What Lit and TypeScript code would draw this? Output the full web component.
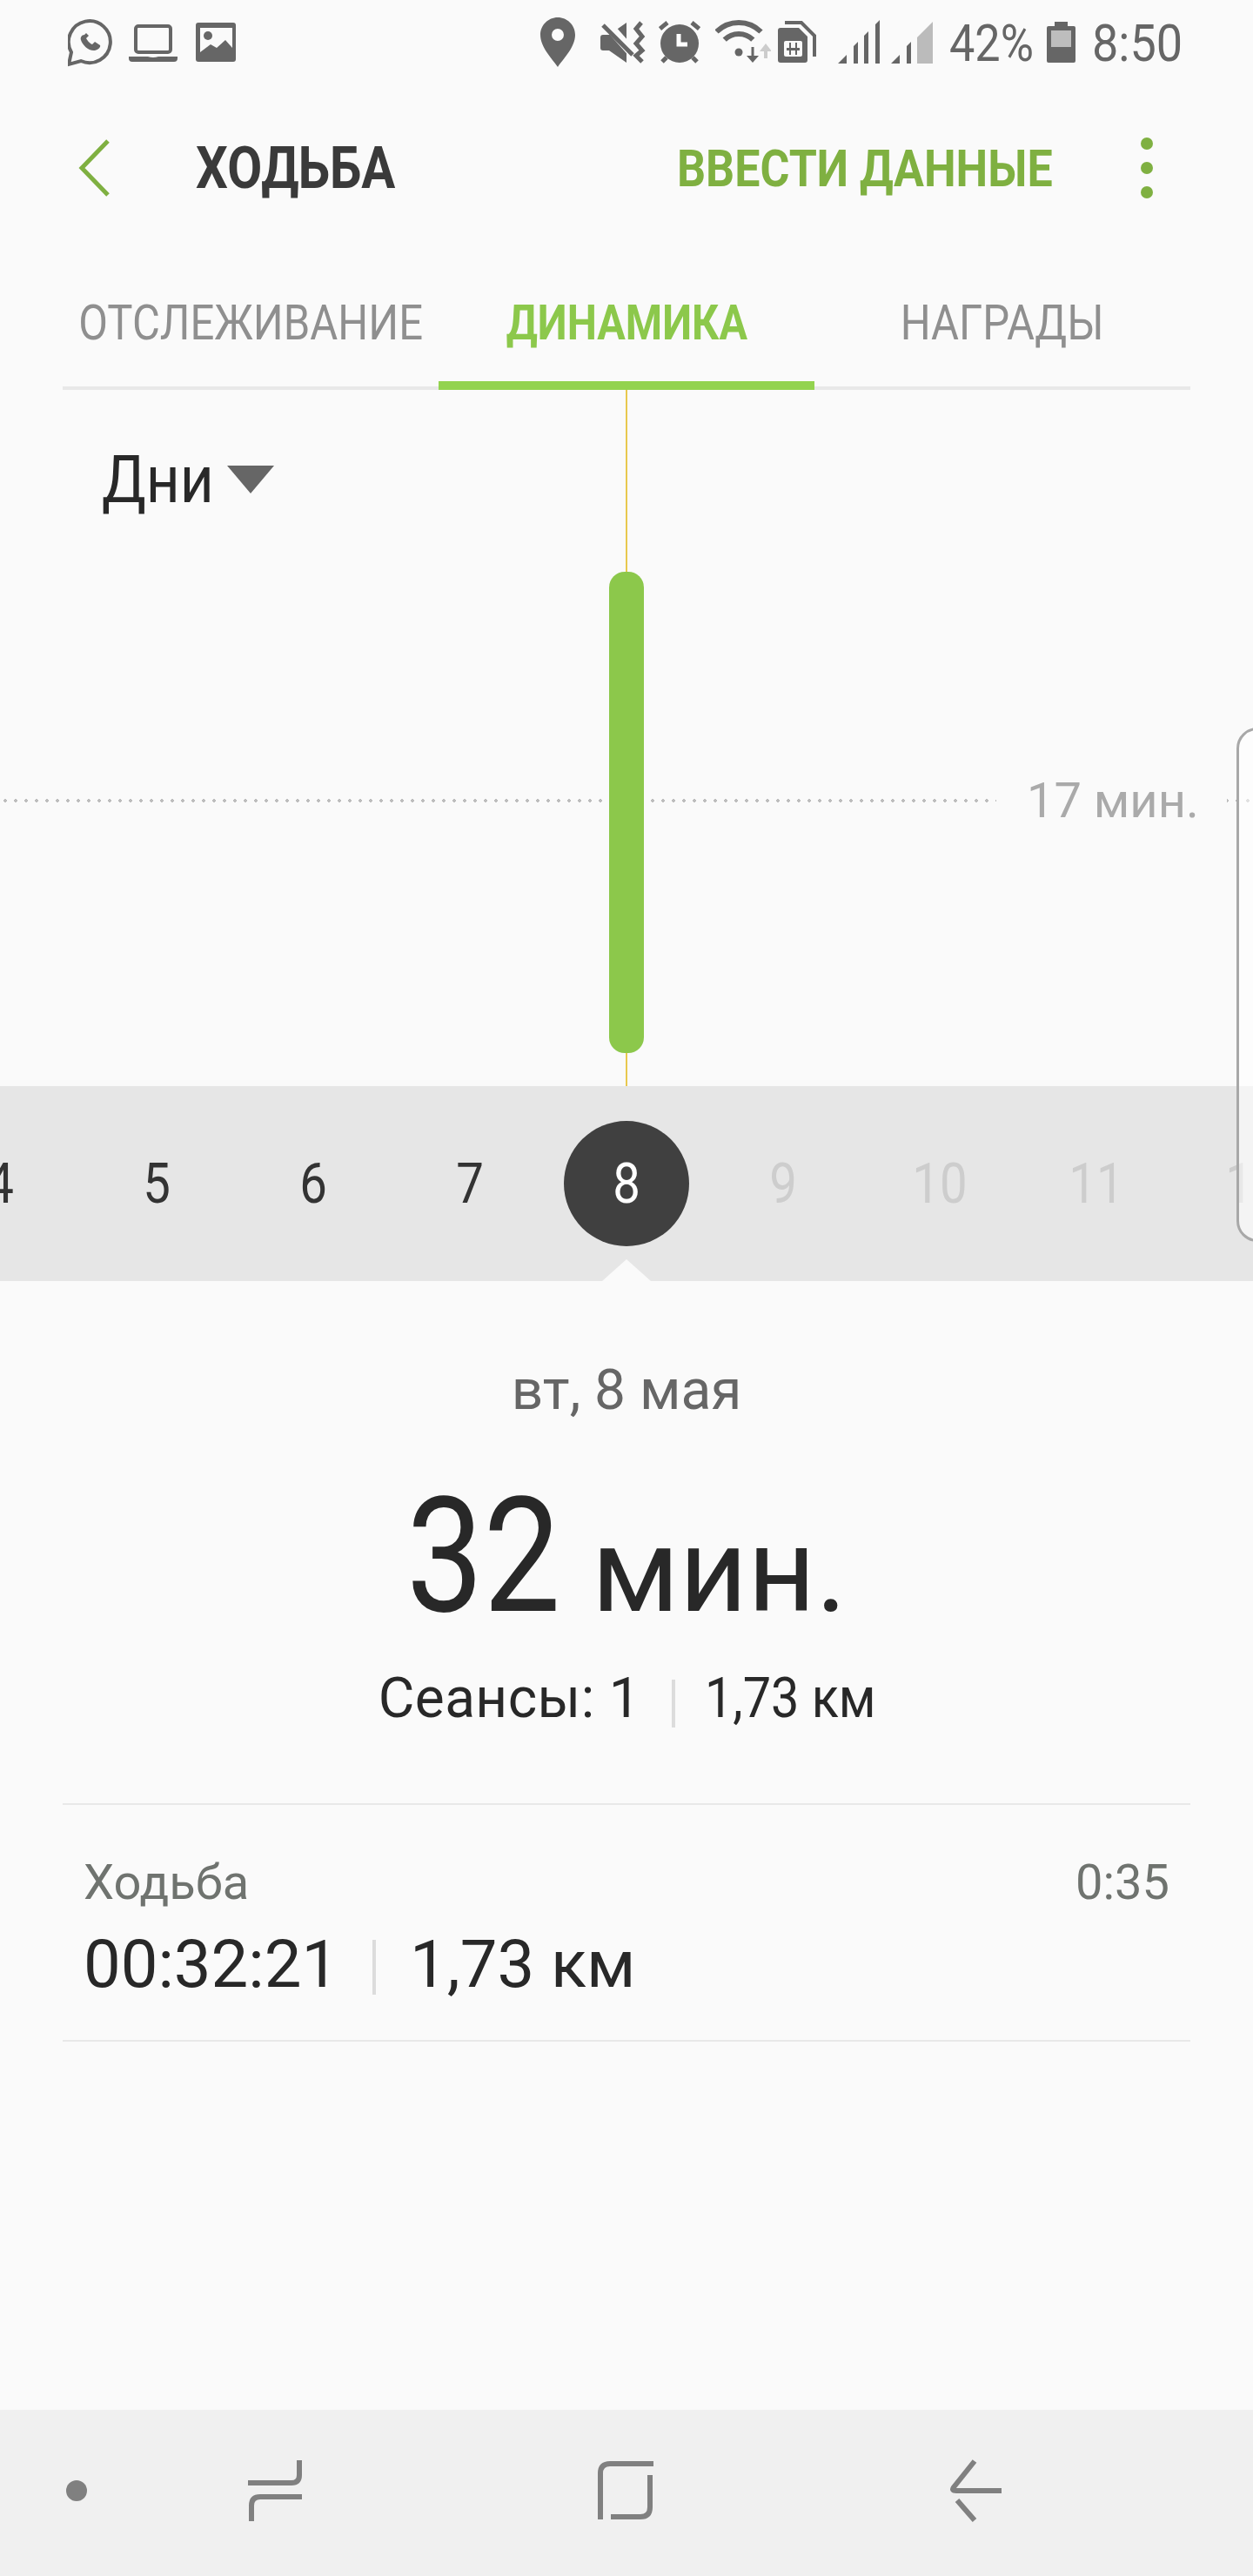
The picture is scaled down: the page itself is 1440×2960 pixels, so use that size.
import { LitElement, html, css } from "lit"
import { customElement } from "lit/decorators.js"

const DAYS = [4, 5, 6, 7, 8, 9, 10, 11, 12]
const TODAY = 8

@customElement("app-root")
export class AppRoot extends LitElement {
  static styles = css`
    :host {
      display: flex;
      flex-direction: column;
      position: relative;
      width: 1440px;
      height: 2960px;
      overflow: hidden;
      background: #fafafa;
      font-family: Roboto, "Noto Sans", sans-serif;
      color: #282828;
    }

    /* status bar */
    .status {
      display: flex;
      align-items: flex-start;
      height: 80px;
      padding: 20px 0 0 78px;
      box-sizing: border-box;
      flex: none;
    }
    .status svg {
      display: block;
      flex: none;
      height: 60px;
    }
    .status .laptop { margin-left: 18px; }
    .status .picture { margin-left: 21px; }
    .status .pin { margin-left: 350px; }
    .status .mute { margin-left: 29px; }
    .status .alarm { margin-left: 15px; }
    .status .wifi { margin-left: 17px; }
    .status .sim { margin-left: 8px; }
    .status .sig1 { margin-left: 24px; }
    .status .sig2 { margin-left: 11px; }
    .status .battery { margin-left: 17px; }
    .status-text {
      flex: none;
      font-size: 60px;
      line-height: 60px;
      color: #666;
      transform-origin: left center;
      white-space: nowrap;
    }
    .pct { width: 95px; margin-left: 18px; transform: scaleX(0.87); }
    .clock { width: 98px; margin-left: 19px; transform: scaleX(0.9); }

    /* app bar */
    .appbar {
      display: flex;
      align-items: center;
      height: 226px;
      flex: none;
      box-sizing: border-box;
      padding-left: 90px;
    }
    .back { flex: none; display: block; }
    .title {
      margin-left: 99px;
      font-size: 66px;
      font-weight: 700;
      color: #3a3a3a;
      white-space: nowrap;
      width: 230px;
      transform: scaleX(0.88);
      transform-origin: left center;
    }
    .action {
      margin-left: 323px;
      font-size: 60px;
      font-weight: 700;
      color: #7fb041;
      white-space: nowrap;
      width: 427px;
      transform: scaleX(0.865);
      transform-origin: left center;
    }
    .dots {
      display: flex;
      flex-direction: column;
      gap: 14px;
      margin-left: 106px;
    }
    .dots i {
      display: block;
      width: 14px;
      height: 14px;
      border-radius: 50%;
      background: #7fb041;
    }

    /* tabs */
    .tabs {
      display: grid;
      grid-template-columns: repeat(3, 432px);
      margin: 0 72px;
      flex: none;
    }
    .tab {
      display: flex;
      align-items: center;
      justify-content: center;
      height: 142px;
      box-sizing: border-box;
      padding-bottom: 8px;
      border-bottom: 4px solid #e8e8e8;
      font-size: 56px;
      color: #8f8f8f;
      white-space: nowrap;
    }
    .tab span { display: block; transform: scaleX(0.875); }
    .tab.active {
      color: #8cc84b;
      font-weight: 700;
      border-bottom: 10px solid #93d34f;
      padding-bottom: 2px;
    }
    .tab.active span { transform: scaleX(0.865); }

    /* chart */
    .chart {
      position: relative;
      height: 800px;
      flex: none;
    }
    .range {
      display: flex;
      align-items: center;
      padding: 58px 0 0 117px;
      font-size: 76px;
      line-height: 90px;
    }
    .range span { display: block; width: 121px; transform: scaleX(0.89); transform-origin: left center; }
    .range i {
      display: block;
      margin-left: 23px;
      width: 0;
      height: 0;
      border-left: 27px solid transparent;
      border-right: 27px solid transparent;
      border-top: 32px solid #666;
    }
    .cursor {
      position: absolute;
      left: 719px;
      top: 0;
      width: 2px;
      height: 800px;
      background: #e8c84e;
    }
    .bar {
      position: absolute;
      left: 700px;
      top: 209px;
      width: 40px;
      height: 553px;
      border-radius: 18px;
      background: #8cc84b;
    }
    .avg {
      position: absolute;
      left: 0;
      top: 470px;
      width: 1440px;
      height: 4px;
      background-image: radial-gradient(circle at center, #bdbdbd 1.6px, transparent 2px);
      background-size: 12px 4px;
    }
    .avg-label {
      position: absolute;
      left: 1145px;
      top: 436px;
      width: 265px;
      padding-left: 35px;
      box-sizing: border-box;
      background: #fafafa;
      font-size: 56px;
      line-height: 72px;
      color: #aaa;
      white-space: nowrap;
    }

    /* date strip */
    .days {
      display: flex;
      justify-content: center;
      align-items: center;
      position: relative;
      height: 224px;
      flex: none;
      background: #e6e6e6;
      overflow: hidden;
    }
    .day {
      flex: none;
      width: 180px;
      display: flex;
      justify-content: center;
      font-size: 64px;
      color: #333;
    }
    .day span {
      display: flex;
      align-items: center;
      justify-content: center;
      width: 144px;
      height: 144px;
      border-radius: 50%;
    }
    .day b { display: block; font-weight: 400; transform: scaleX(0.88); }
    .day.future { color: #cdcdcd; }
    .day.today span { background: #404040; color: #fff; }
    .notch {
      position: absolute;
      left: 692px;
      bottom: 0;
      width: 0;
      height: 0;
      border-left: 28px solid transparent;
      border-right: 28px solid transparent;
      border-bottom: 25px solid #fafafa;
    }

    /* daily summary */
    .summary {
      display: flex;
      flex-direction: column;
      align-items: center;
      flex: none;
    }
    .date {
      margin-top: 90px;
      font-size: 64px;
      line-height: 72px;
      color: #666;
    }
    .total {
      display: flex;
      align-items: baseline;
      margin-top: 48px;
      font-size: 184px;
      line-height: 212px;
      white-space: nowrap;
    }
    .total span {
      display: block;
      width: 177px;
      transform: scaleX(0.857);
      transform-origin: left center;
    }
    .total small { display: block; margin-left: 36px; font-size: 136px; }
    .meta {
      display: flex;
      align-items: center;
      margin-top: 5px;
      font-size: 64px;
      line-height: 72px;
      white-space: nowrap;
    }
    .meta .count { letter-spacing: 0.4px; }
    .meta .dist {
      display: block;
      width: 195px;
      transform: scaleX(0.9);
      transform-origin: left center;
    }
    .sep {
      display: block;
      flex: none;
      width: 4px;
      background: #dcdcdc;
    }
    .meta .sep { height: 55px; margin: 10px 34px 0 36px; }

    /* session row */
    .session {
      display: flex;
      flex-direction: column;
      height: 274px;
      margin: 84px 72px 0;
      padding: 0 24px;
      box-sizing: border-box;
      flex: none;
      border-top: 2px solid #e8e8e8;
      border-bottom: 2px solid #e8e8e8;
    }
    .session-top {
      display: flex;
      justify-content: space-between;
      margin-top: 57px;
      font-size: 56px;
      line-height: 64px;
      color: #6f736f;
    }
    .session-main {
      display: flex;
      align-items: center;
      margin-top: 18px;
      font-size: 76px;
      line-height: 88px;
      white-space: nowrap;
    }
    .session-main .sep { height: 63px; margin: 6px 39px 0 39px; }

    /* navigation bar */
    .nav {
      display: flex;
      align-items: center;
      margin-top: auto;
      height: 191px;
      flex: none;
      background: #f0f0f0;
      padding: 0 0 6px 76px;
      box-sizing: border-box;
    }
    .nav svg { display: block; flex: none; }
    .nav .dot { width: 24px; height: 24px; border-radius: 50%; background: #808080; flex: none; }
    .nav .recents { margin-left: 185px; }
    .nav .home { margin-left: 340px; }
    .nav .navback { margin-left: 340px; }

    /* edge panel handle */
    .handle {
      position: absolute;
      left: 1421px;
      top: 836px;
      width: 40px;
      height: 591px;
      box-sizing: border-box;
      border: 3px solid #a8a8a8;
      border-radius: 24px 0 0 24px;
      background: rgba(255, 255, 255, 0.55);
    }
  `

  private statusIcons() {
    return html`
      <svg class="whatsapp" width="52" viewBox="0 0 52 60">
        <path d="M4 40 A24 24 0 1 1 15 50 L1 54 Z" fill="none" stroke="#666" stroke-width="4" stroke-linejoin="miter"/>
        <path d="M19 20 C16 20 14 23 15 26 C17 32 24 39 31 38 C35 37 38 34 37 32 L31 28 L28 31 C25 30 22 26 21 24 L24 21 L21 18 Z" fill="#666"/>
      </svg>
      <svg class="laptop" width="56" viewBox="0 0 56 60">
        <rect x="8" y="10" width="40" height="30" rx="3" fill="none" stroke="#666" stroke-width="4"/>
        <path d="M0 45 H22 Q28 47 34 45 H56 V47 Q56 51 52 51 H4 Q0 51 0 47 Z" fill="#666"/>
      </svg>
      <svg class="picture" width="46" viewBox="0 0 46 60">
        <rect x="0" y="6" width="46" height="45" rx="3" fill="#666"/>
        <path d="M5 12 H42 V35 L34 26 L24 35 L17 31 L5 40 Z" fill="#fafafa"/>
        <circle cx="14" cy="21" r="5" fill="#666"/>
      </svg>
      <svg class="pin" width="40" viewBox="0 0 40 60">
        <path fill-rule="evenodd" fill="#666" d="M20 0 C31 0 40 9 40 20 C40 34 27 47 20 57 C13 47 0 34 0 20 C0 9 9 0 20 0 Z M20 13 A7 7 0 1 0 20 27 A7 7 0 1 0 20 13 Z"/>
      </svg>
      <svg class="mute" width="52" viewBox="0 0 52 60">
        <path d="M3 20 H10 L30 6 V52 L10 38 H3 Q0 38 0 35 V23 Q0 20 3 20 Z" fill="#666"/>
        <path d="M6 6 L38 42" stroke="#fafafa" stroke-width="11" fill="none"/>
        <path d="M3 9 L37 43" stroke="#666" stroke-width="5" fill="none"/>
        <path d="M47 6 L41 13 L48 22 L41 30 L48 38 L41 44 L48 51" stroke="#666" stroke-width="5" fill="none"/>
      </svg>
      <svg class="alarm" width="48" viewBox="0 0 48 60">
        <circle cx="24" cy="30" r="22" fill="#666"/>
        <path d="M1.5 13 L10 6 M46.5 13 L38 6 M4 51 L9 46 M44 51 L39 46" stroke="#666" stroke-width="5" fill="none"/>
        <path d="M23 19 V31 H33" stroke="#fff" stroke-width="5" fill="none"/>
      </svg>
      <svg class="wifi" width="64" viewBox="0 0 64 60">
        <path d="M1.5 16.5 A36 36 0 0 1 52.5 16.5 M10.7 25.7 A23 23 0 0 1 43.3 25.7" stroke="#666" stroke-width="6" fill="none"/>
        <circle cx="27" cy="40" r="4.5" fill="#666"/>
        <path d="M41.5 34 H44.5 V44 H50 L43 52 L36 44 H41.5 Z" fill="#666"/>
        <path d="M56 47 H60 V39 H65 L58 30 L51 39 H56 Z" fill="#ccc"/>
      </svg>
      <svg class="sim" width="44" viewBox="0 0 44 60">
        <path d="M8 6 H27 L42 21 V45" stroke="#666" stroke-width="4" fill="none"/>
        <path d="M3 12 H24 L34 22 V49 Q34 52 31 52 H3 Q0 52 0 49 V15 Q0 12 3 12 Z" fill="#666"/>
        <rect x="7" y="27" width="21" height="18" rx="2" fill="#fafafa"/>
        <path d="M13 29 H15 V35 H20 V29 H22 V43 H20 V38 H15 V43 H13 Z M10 35 H25 V38 H10 Z" fill="#666"/>
      </svg>
      <svg class="sig1" width="50" viewBox="0 0 50 60">
        <path d="M1 53 L11 43 V53 Z M19 33 L24 28 V53 H19 Z M31 21 L36 16 V53 H31 Z M44 8 L49 3 V53 H44 Z" fill="#666"/>
      </svg>
      <svg class="sig2" width="50" viewBox="0 0 50 60">
        <path d="M1 53 L11 43 V53 Z M19 33 L24 28 V53 H19 Z" fill="#666"/>
        <path d="M31 23 L49 5 V53 H31 Z" fill="#bbb"/>
      </svg>
    `
  }

  private batteryIcon() {
    return html`
      <svg class="battery" width="33" viewBox="0 0 33 60">
        <path d="M9 5 H24 V10 H31 Q33 10 33 12 V50 Q33 52 31 52 H2 Q0 52 0 50 V12 Q0 10 2 10 H9 Z" fill="#666"/>
        <rect x="5" y="15" width="23" height="19" fill="#bdbdbd"/>
      </svg>
    `
  }

  render() {
    return html`
      <div class="status">
        ${this.statusIcons()}
        <div class="status-text pct">42%</div>
        ${this.batteryIcon()}
        <div class="status-text clock">8:50</div>
      </div>

      <div class="appbar">
        <svg class="back" width="36" height="66" viewBox="0 0 36 66">
          <path d="M34 2 L4 33 L34 64" fill="none" stroke="#7fb041" stroke-width="5"/>
        </svg>
        <div class="title">ХОДЬБА</div>
        <div class="action">ВВЕСТИ ДАННЫЕ</div>
        <div class="dots"><i></i><i></i><i></i></div>
      </div>

      <div class="tabs">
        <div class="tab"><span>ОТСЛЕЖИВАНИЕ</span></div>
        <div class="tab active"><span>ДИНАМИКА</span></div>
        <div class="tab"><span>НАГРАДЫ</span></div>
      </div>

      <div class="chart">
        <div class="range"><span>Дни</span><i></i></div>
        <div class="avg"></div>
        <div class="avg-label">17 мин.</div>
        <div class="cursor"></div>
        <div class="bar"></div>
      </div>

      <div class="days">
        ${DAYS.map(d => html`
          <div class="day ${d === TODAY ? "today" : d > TODAY ? "future" : ""}"><span><b>${d}</b></span></div>
        `)}
        <div class="notch"></div>
      </div>

      <div class="summary">
        <div class="date">вт, 8 мая</div>
        <div class="total"><span>32</span><small>мин.</small></div>
        <div class="meta"><span class="count">Сеансы: 1</span><i class="sep"></i><span class="dist">1,73 км</span></div>
      </div>

      <div class="session">
        <div class="session-top"><span>Ходьба</span><span>0:35</span></div>
        <div class="session-main">00:32:21<span class="sep"></span>1,73 км</div>
      </div>

      <div class="nav">
        <div class="dot"></div>
        <svg class="recents" width="62" height="72" viewBox="0 0 62 72">
          <path d="M59 1 V18 Q59 27 50 27 H0 M62 43 H14 Q4 43 4 53 V71" fill="none" stroke="#808080" stroke-width="6"/>
        </svg>
        <svg class="home" width="64" height="70" viewBox="0 0 64 70">
          <path d="M64 4 H14 Q3 4 3 15 V68 M60 17 V54 Q60 65 49 65 H15" fill="none" stroke="#808080" stroke-width="6"/>
        </svg>
        <svg class="navback" width="62" height="72" viewBox="0 0 62 72">
          <path d="M29 2 L5 32 Q2 36 8 36 H60 M9 47 L29 70" fill="none" stroke="#808080" stroke-width="6"/>
        </svg>
      </div>

      <div class="handle"></div>
    `
  }
}
